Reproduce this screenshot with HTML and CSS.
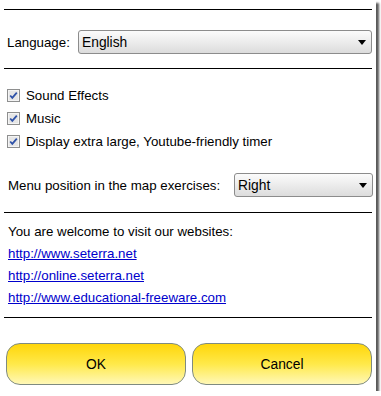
FILE: index.html
```html
<!DOCTYPE html>
<html>
	<head>
		<meta charset="utf-8">
		<title>Options</title>
		<link rel="stylesheet" href="styles.css">
	</head>
	<body>
		<div class="dialog">
			<div class="rule"></div>
			<div class="lang">
				<span class="label">Language:</span>
				<div class="combo combo-wide">
					<span>English</span>
					<svg width="8" height="5" viewBox="0 0 8 5"><path d="M0 0H8L4 5Z" fill="#000"/></svg>
				</div>
			</div>
			<div class="rule"></div>
			<div class="checks">
				<div class="check">
					<svg width="13" height="13" viewBox="0 0 13 13"><rect x="0.5" y="0.5" width="12" height="12" fill="#f4f4f4" stroke="#8e8f8f"/><rect x="2" y="2" width="9" height="9" fill="#e6e6e6"/><path d="M3.2 6.5L5.3 8.8L9.8 3.6" fill="none" stroke="#2f52a8" stroke-width="1.8"/></svg>
					<span>Sound Effects</span>
				</div>
				<div class="check">
					<svg width="13" height="13" viewBox="0 0 13 13"><rect x="0.5" y="0.5" width="12" height="12" fill="#f4f4f4" stroke="#8e8f8f"/><rect x="2" y="2" width="9" height="9" fill="#e6e6e6"/><path d="M3.2 6.5L5.3 8.8L9.8 3.6" fill="none" stroke="#2f52a8" stroke-width="1.8"/></svg>
					<span>Music</span>
				</div>
				<div class="check">
					<svg width="13" height="13" viewBox="0 0 13 13"><rect x="0.5" y="0.5" width="12" height="12" fill="#f4f4f4" stroke="#8e8f8f"/><rect x="2" y="2" width="9" height="9" fill="#e6e6e6"/><path d="M3.2 6.5L5.3 8.8L9.8 3.6" fill="none" stroke="#2f52a8" stroke-width="1.8"/></svg>
					<span>Display extra large, Youtube-friendly timer</span>
				</div>
			</div>
			<div class="menu">
				<span class="label">Menu position in the map exercises:</span>
				<div class="combo combo-small">
					<span>Right</span>
					<svg width="8" height="5" viewBox="0 0 8 5"><path d="M0 0H8L4 5Z" fill="#000"/></svg>
				</div>
			</div>
			<div class="rule"></div>
			<div class="sites">
				<p>You are welcome to visit our websites:</p>
				<a href="#">http://www.seterra.net</a>
				<a href="#">http://online.seterra.net</a>
				<a href="#">http://www.educational-freeware.com</a>
			</div>
			<div class="rule"></div>
			<div class="buttons">
				<div class="btn">OK</div>
				<div class="btn">Cancel</div>
			</div>
		</div>
	</body>
</html>
```
FILE: styles.css
```css
body{
	margin: 0;
	background: #fff;
	font-family: "Liberation Sans", Arial, sans-serif;
	font-size: 13.3px;
	color: #000;
}
.dialog{
	width: 376px;
	height: 391px;
	box-sizing: border-box;
	padding: 9px 4px 0 4px;
	background: #fff;
	box-shadow: 3px 3px 2px rgba(0,0,0,0.65);
}
.rule{
	height: 1px;
	background: #000;
}
.lang{
	display: flex;
	align-items: center;
	margin: 20px 0 14px 3px;
}
.lang .label{
	width: 71px;
}
.combo{
	height: 24px;
	box-sizing: border-box;
	border: 1px solid #8c8c8c;
	border-radius: 3px;
	background: linear-gradient(#fbfbfb, #ececec 50%, #dcdcdc);
	display: flex;
	align-items: center;
	justify-content: space-between;
	padding: 0 5px 0 3px;
	font-size: 13.8px;
}
.combo-wide{
	flex: 1;
}
.combo-small{
	width: 139px;
	margin-left: auto;
	margin-right: -1px;
}
.checks{
	margin: 15px 0 0 3px;
}
.check{
	display: flex;
	align-items: center;
	height: 23px;
}
.check svg{
	margin-right: 6px;
}
.menu{
	display: flex;
	align-items: center;
	margin: 20px 0 15px 4px;
}
.sites{
	margin: 8px 0 0 4px;
}
.sites p{
	margin: 0;
	height: 22px;
	line-height: 22px;
}
.sites a{
	display: block;
	height: 22px;
	line-height: 22px;
	color: #0000cc;
}
.sites a:last-child{
	margin-bottom: 8px;
}
.buttons{
	display: flex;
	gap: 6px;
	margin-top: 25px;
	padding-right: 0;
}
.btn{
	flex: 1;
	height: 42px;
	box-sizing: border-box;
	border: 1px solid #7f8b80;
	border-radius: 14px;
	background: linear-gradient(#ffd60a, #ffe94a 50%, #fff8b8);
	display: flex;
	align-items: center;
	justify-content: center;
	font-size: 13.8px;
}
.btn:first-child{
	margin-left: 2px;
}
```
